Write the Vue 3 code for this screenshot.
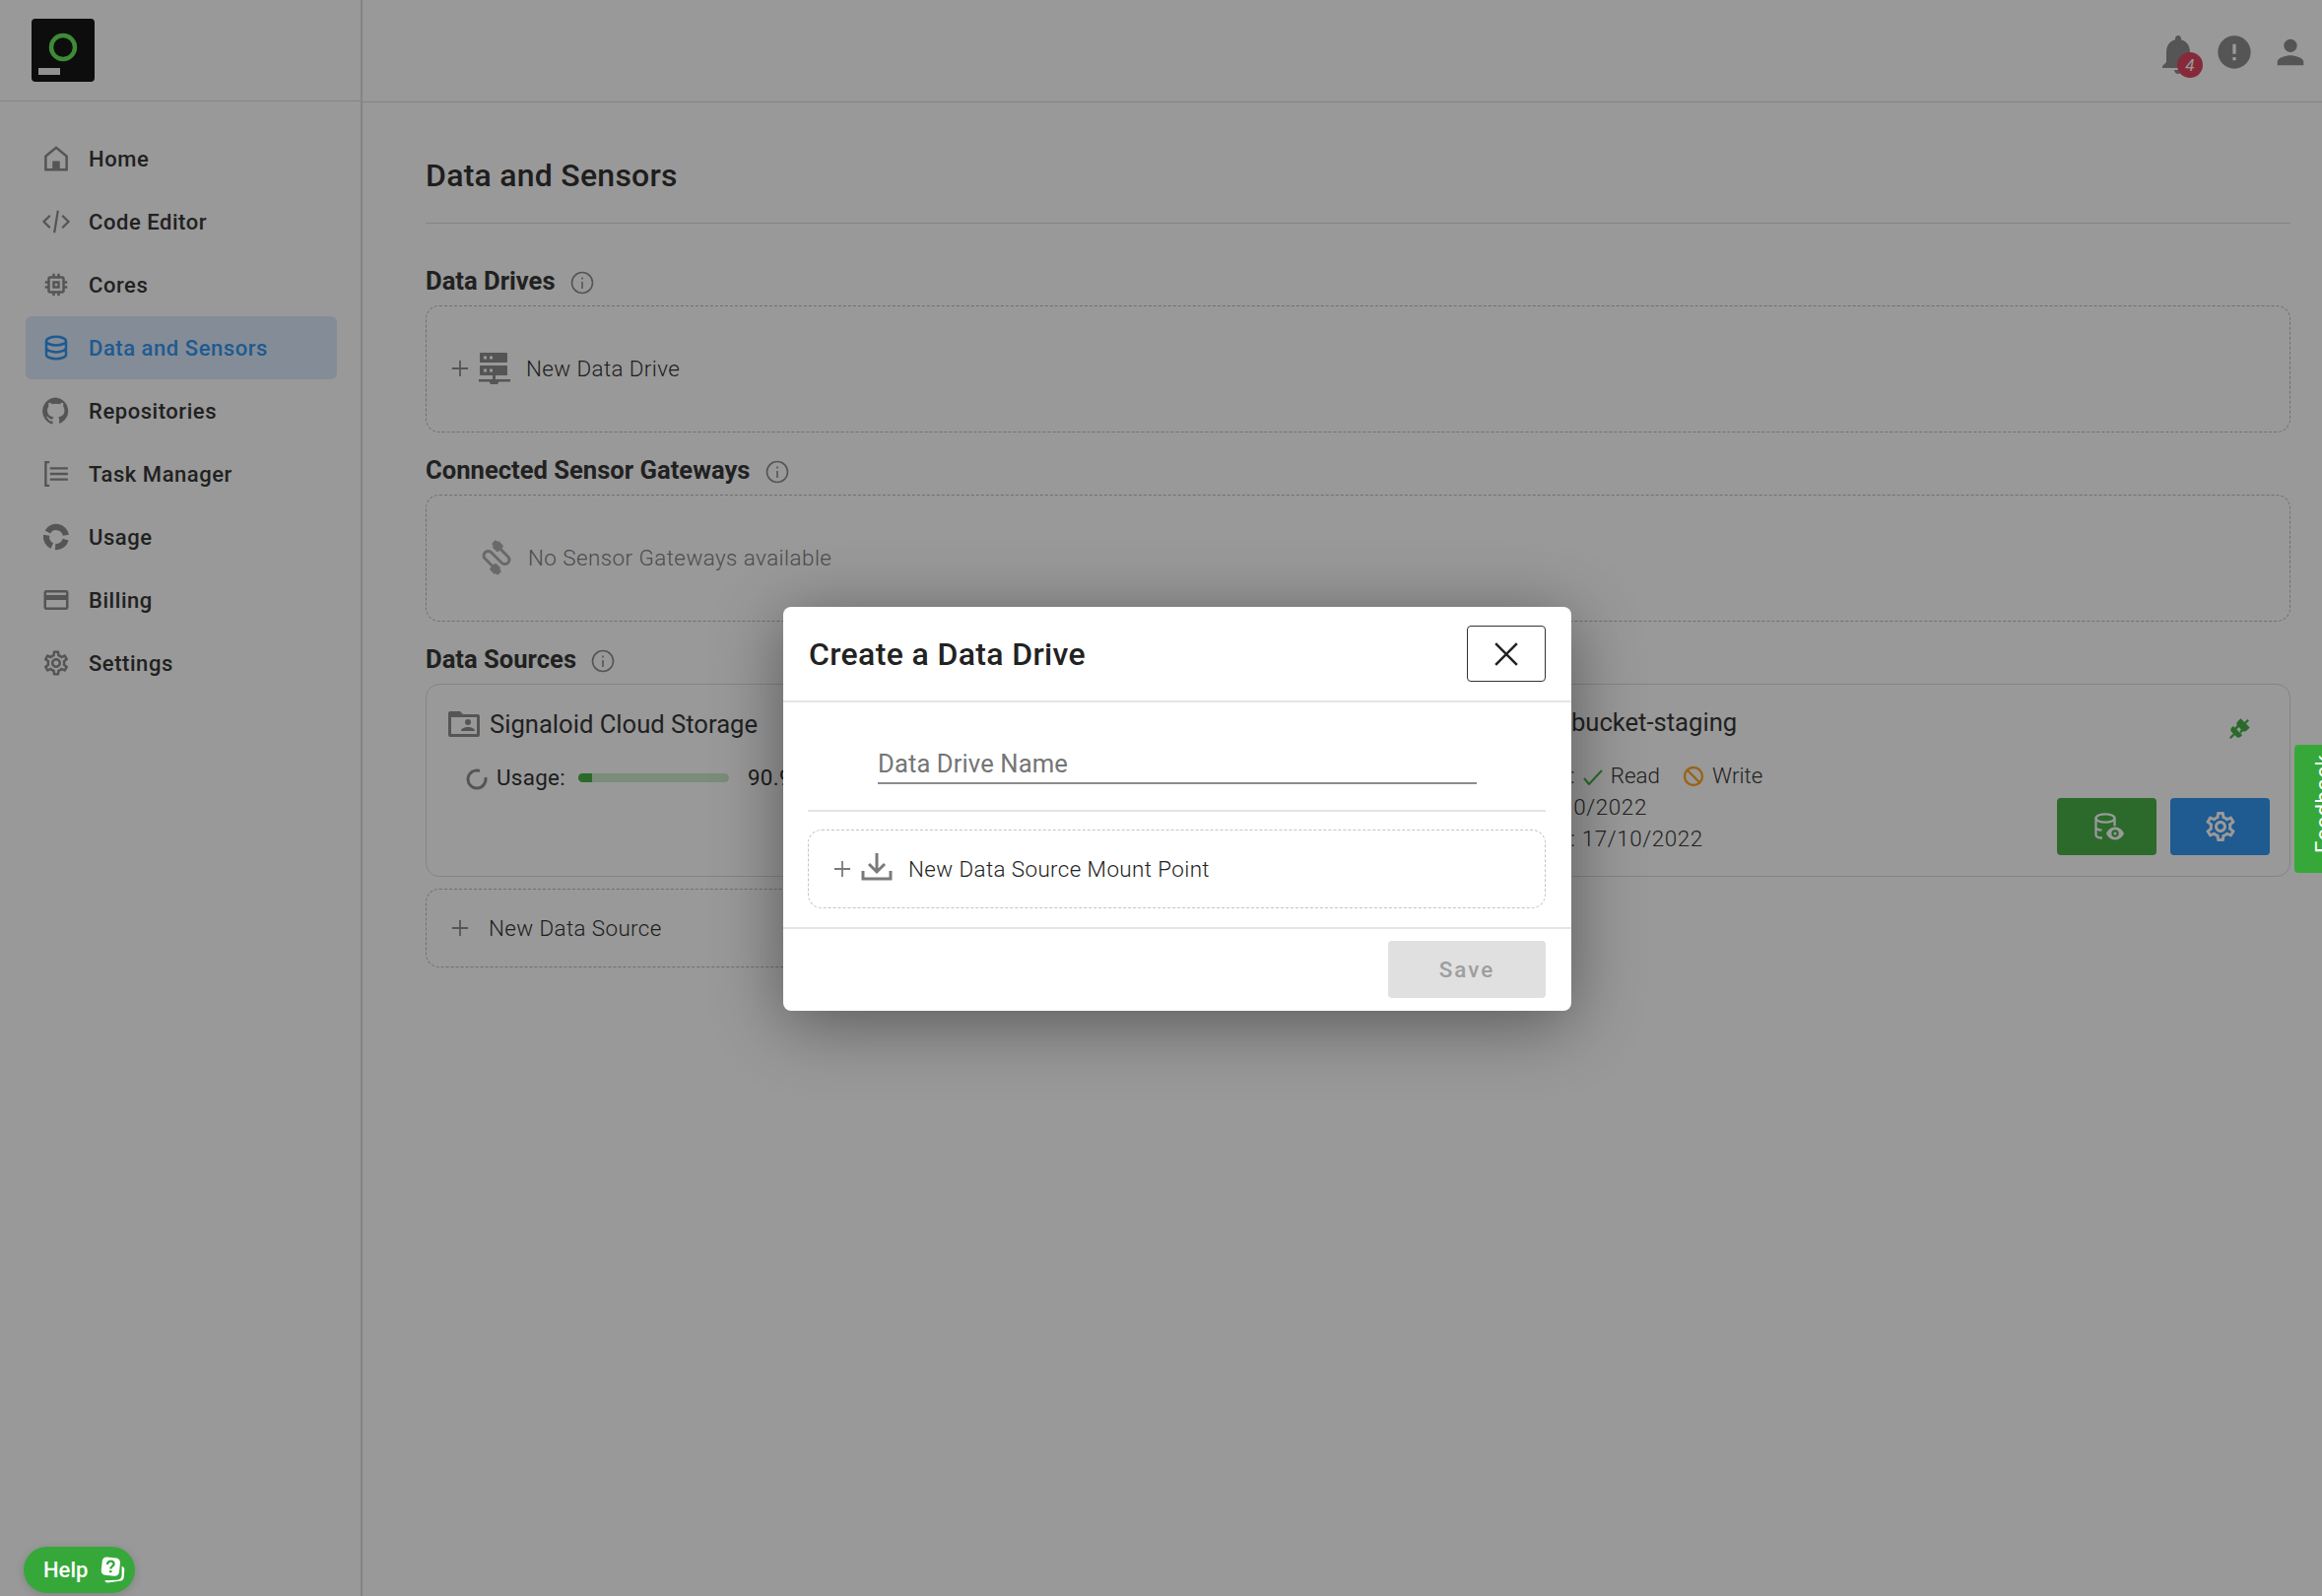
<script setup>
const nav = [
  { label: 'Home', stroke: 'M3.500 21V10L12 3l8.500 7v11z', fill: 'M9 14h6v7H9z' },
  { label: 'Code Editor', stroke: 'M7 7l-5 5 5 5M17 7l5 5-5 5M13.500 3l-3 18', sw: 1.800 },
  { label: 'Cores', fill: 'M15 9H9v6h6V9zm-2 4h-2v-2h2v2zm8-2V9h-2V7c0-1.100-.9-2-2-2h-2V3h-2v2h-2V3H9v2H7c-1.100 0-2 .9-2 2v2H3v2h2v2H3v2h2v2c0 1.100.9 2 2 2h2v2h2v-2h2v2h2v-2h2c1.100 0 2-.9 2-2v-2h2v-2h-2v-2h2zm-4 6H7V7h10v10z' },
  { label: 'Data and Sensors', active: true, stroke: 'M4 6.500C4 4.500 8 3 12 3s8 1.500 8 3.500S16 10 12 10 4 8.500 4 6.500zM4 6.500v11C4 19.500 8 21 12 21s8-1.500 8-3.500v-11M4 12c0 2 4 3.500 8 3.500s8-1.500 8-3.500' },
  { label: 'Repositories', fill: 'M12 1.270a11 11 0 00-3.480 21.460c.55.09.73-.28.73-.55v-1.840c-3.030.64-3.670-1.460-3.670-1.460-.55-1.290-1.280-1.650-1.280-1.650-.92-.65.1-.65.1-.65 1.100 0 1.730 1.100 1.730 1.100.92 1.650 2.560 1.200 3.100.92a2.700 2.700 0 01.65-1.640c-2.470-.28-5.020-1.200-5.020-5.500 0-1.200.46-2.200 1.100-3.020-.1-.27-.46-1.370.1-3 0 0 .91-.28 3.010 1.100a10.500 10.500 0 015.500 0c2.100-1.380 3-1.100 3-1.100.56 1.630.2 2.730.1 3 .64.82 1.100 1.820 1.100 3.020 0 4.300-2.550 5.220-5.020 5.500.37.36.74.92.74 1.920v2.830c0 .27.18.64.73.55A11 11 0 0012 1.270' },
  { label: 'Task Manager', stroke: 'M6.500 2.500H3.500v19h3M7 7.500h14.500M7 12h14.500M7 16.500h14.500', sw: 1.900 },
  { label: 'Usage', stroke: 'M5.070 8A8 8 0 0 1 19.880 10.600M19.700 14.070A8 8 0 0 1 11.300 19.970M8.600 19.250A8 8 0 0 1 4.120 10.600', sw: 5 },
  { label: 'Billing', fill: 'M20 4H4c-1.110 0-1.990.89-1.990 2L2 18c0 1.110.89 2 2 2h16c1.110 0 2-.89 2-2V6c0-1.110-.89-2-2-2zm0 14H4v-6h16v6zm0-10H4V6h16v2z' },
  { label: 'Settings', fill: 'M19.430 12.980c.04-.32.07-.64.07-.98 0-.34-.03-.66-.07-.98l2.110-1.650c.19-.15.24-.42.12-.64l-2-3.460c-.09-.16-.26-.25-.44-.25-.06 0-.12.01-.17.03l-2.490 1c-.52-.4-1.080-.73-1.690-.98l-.38-2.650C14.460 2.180 14.250 2 14 2h-4c-.25 0-.46.18-.49.42l-.38 2.650c-.61.25-1.170.59-1.690.98l-2.490-1c-.06-.02-.12-.03-.18-.03-.17 0-.34.09-.43.25l-2 3.460c-.13.22-.07.49.12.64l2.110 1.650c-.04.32-.07.65-.07.98 0 .33.03.66.07.98l-2.110 1.650c-.19.15-.24.42-.12.64l2 3.460c.09.16.26.25.44.25.06 0 .12-.01.17-.03l2.490-1c.52.4 1.080.73 1.690.98l.38 2.650c.03.24.24.42.49.42h4c.25 0 .46-.18.49-.42l.38-2.650c.61-.25 1.170-.59 1.690-.98l2.490 1c.06.02.12.03.18.03.17 0 .34-.09.43-.25l2-3.460c.12-.22.07-.49-.12-.64l-2.110-1.650zm-1.980-1.710c.04.31.05.52.05.73 0 .21-.02.43-.05.73l-.14 1.130.89.7 1.080.84-.7 1.210-1.270-.51-1.040-.42-.9.68c-.43.32-.84.56-1.250.73l-1.060.43-.16 1.130-.2 1.350h-1.400l-.19-1.350-.16-1.130-1.060-.43c-.43-.18-.83-.41-1.230-.71l-.91-.7-1.060.43-1.270.51-.7-1.210 1.080-.84.89-.7-.14-1.130c-.03-.31-.05-.54-.05-.74s.02-.43.05-.73l.14-1.130-.89-.7-1.080-.84.7-1.210 1.270.51 1.040.42.9-.68c.43-.32.84-.56 1.250-.73l1.060-.43.16-1.130.2-1.350h1.390l.19 1.350.16 1.130 1.060.43c.43.18.83.41 1.230.71l.91.7 1.060-.43 1.270-.51.7 1.210-1.070.85-.89.7.14 1.130zM12 8c-2.210 0-4 1.790-4 4s1.790 4 4 4 4-1.790 4-4-1.790-4-4-4zm0 6c-1.100 0-2-.9-2-2s.9-2 2-2 2 .9 2 2-.9 2-2 2z' }
]
const gear = nav[8].fill
</script>

<template>
  <div class="app">
    <aside class="sidebar">
      <div class="brand">
        <svg class="logo" viewBox="0 0 64 64">
          <rect width="64" height="64" rx="4" fill="#161616" />
          <circle cx="32" cy="29" r="12" fill="none" stroke="#66e85c" stroke-width="4.500" />
          <rect x="7" y="50" width="22" height="7" fill="#f2f2f2" />
        </svg>
      </div>
      <nav class="nav">
        <a v-for="item in nav" :key="item.label" class="nav-item" :class="{ active: item.active }">
          <svg class="nav-icon" viewBox="0 0 24 24">
            <path v-if="item.stroke" :d="item.stroke" fill="none" stroke="currentColor" :stroke-width="item.sw || 2" />
            <path v-if="item.fill" :d="item.fill" fill="currentColor" />
          </svg>
          <span>{{ item.label }}</span>
        </a>
      </nav>
    </aside>

    <div class="content">
      <header class="topbar">
        <span class="bell">
          <svg viewBox="0 0 24 24" class="top-icon bell-icon"><path d="M12 22c1.100 0 2-.9 2-2h-4c0 1.100.89 2 2 2zm6-6v-5c0-3.070-1.640-5.640-4.500-6.320V4c0-.83-.67-1.500-1.500-1.500s-1.500.67-1.500 1.500v.68C7.630 5.360 6 7.920 6 11v5l-2 2v1h16v-1l-2-2z" /></svg>
          <span class="badge">4</span>
        </span>
        <svg viewBox="0 0 24 24" class="top-icon"><path d="M12 2C6.480 2 2 6.480 2 12s4.480 10 10 10 10-4.480 10-10S17.520 2 12 2zm1 15h-2v-2h2v2zm0-4h-2V7h2v6z" /></svg>
        <svg viewBox="0 0 24 24" class="top-icon"><path d="M12 12c2.210 0 4-1.790 4-4s-1.790-4-4-4-4 1.790-4 4 1.790 4 4 4zm0 2c-2.670 0-8 1.340-8 4v2h16v-2c0-2.660-5.330-4-8-4z" /></svg>
      </header>

      <main class="main">
        <h1 class="title">Data and Sensors</h1>

        <h2 class="heading">Data Drives
          <svg class="info" viewBox="0 0 24 24"><circle cx="12" cy="12" r="10.500" /><path d="M12 11v7M12 6.500v2" /></svg>
        </h2>
        <div class="dashed tall add-row">
          <svg class="plus" viewBox="0 0 20 20"><path d="M10 1v18M1 10h18" /></svg>
          <svg class="server" viewBox="0 0 32 32">
            <path fill-rule="evenodd" d="M2 0h26a1 1 0 0 1 1 1v8a1 1 0 0 1-1 1H2a1 1 0 0 1-1-1V1a1 1 0 0 1 1-1zm3 3.500v3h3v-3zm6 0v3h3v-3zM2 13h26a1 1 0 0 1 1 1v8a1 1 0 0 1-1 1H2a1 1 0 0 1-1-1v-8a1 1 0 0 1 1-1zm3 3.500v3h3v-3zm6 0v3h3v-3z" />
            <path d="M14 23h3v4h15v2.500H20a4 3 0 0 1-9 0H0V27h14z" />
          </svg>
          <span class="add-label">New Data Drive</span>
        </div>

        <h2 class="heading spaced">Connected Sensor Gateways
          <svg class="info" viewBox="0 0 24 24"><circle cx="12" cy="12" r="10.500" /><path d="M12 11v7M12 6.500v2" /></svg>
        </h2>
        <div class="dashed tall empty-row">
          <svg class="cable" viewBox="0 0 24 24">
            <path transform="rotate(-45 12 12)" d="M20 5V4c0-.55-.45-1-1-1h-2c-.55 0-1 .45-1 1v1h-1v4c0 .55.45 1 1 1h1v7c0 1.100-.9 2-2 2s-2-.9-2-2V7c0-2.210-1.790-4-4-4S5 4.790 5 7v7H4c-.55 0-1 .45-1 1v4h1v1c0 .55.45 1 1 1h2c.55 0 1-.45 1-1v-1h1v-4c0-.55-.45-1-1-1H7V7c0-1.100.9-2 2-2s2 .9 2 2v10c0 2.210 1.790 4 4 4s4-1.790 4-4v-7h1c.55 0 1-.45 1-1V5h-1z" fill="currentColor" />
          </svg>
          <span class="empty-label">No Sensor Gateways available</span>
        </div>

        <h2 class="heading spaced">Data Sources
          <svg class="info" viewBox="0 0 24 24"><circle cx="12" cy="12" r="10.500" /><path d="M12 11v7M12 6.500v2" /></svg>
        </h2>
        <div class="sources">
          <section class="card card-left">
            <div class="card-title">
              <svg class="folder" viewBox="0 0 32 26">
                <path fill-rule="evenodd" d="M2 0h10l3 3h15a2 2 0 0 1 2 2v19a2 2 0 0 1-2 2H2a2 2 0 0 1-2-2V2a2 2 0 0 1 2-2zm1 6v17h26V6z" />
                <circle cx="20" cy="11" r="3" />
                <path d="M13 20c0-3 4-4 7-4s7 1 7 4z" />
              </svg>
              <span>Signaloid Cloud Storage</span>
            </div>
            <div class="usage">
              <svg class="usage-ring" viewBox="0 0 22 22"><path d="M19.800 9A9 9 0 1 1 14 2.500" /></svg>
              <span class="usage-label">Usage:</span>
              <span class="bar"><span class="bar-fill" :style="{ width: '9.100%' }"></span></span>
              <span class="usage-value">90.9 GB / 1 TB</span>
            </div>
          </section>

          <section class="card card-right">
            <div class="right-info">
              <div class="bucket">signaloid-bucket-staging</div>
              <div class="perms">
                <span>Permissions:</span>
                <svg class="check" viewBox="0 0 20 16"><path d="M1 9l5 6L19 1" /></svg>
                <span>Read</span>
                <svg class="ban" viewBox="0 0 22 22"><circle cx="11" cy="11" r="9" /><path d="M5 5l12 12" /></svg>
                <span>Write</span>
              </div>
              <div class="date">Created: 17/10/2022</div>
              <div class="date">Last Updated: 17/10/2022</div>
            </div>
            <div class="right-actions">
              <svg class="plug" viewBox="0 0 24 24">
                <g transform="rotate(45 12 12)">
                  <path d="M12 0v5M12 19v5" fill="none" stroke="currentColor" stroke-width="2" />
                  <path d="M6 4h12v4a3 3 0 0 1-3 3H9a3 3 0 0 1-3-3z" fill="currentColor" />
                  <path d="M8 10h2.500v4H15v-1h-1.500v-3H16v4h2v2a3 3 0 0 1-3 3H9a3 3 0 0 1-3-3v-2h2z" fill="currentColor" />
                </g>
              </svg>
              <div class="btns">
                <button class="btn green" type="button">
                  <svg viewBox="0 0 30 28" class="btn-icon db-eye">
                    <ellipse cx="11" cy="5.500" rx="9.500" ry="4.200" fill="none" stroke="currentColor" stroke-width="2.300" />
                    <path d="M1.500 5.500v17c0 1.800 3 3 6.500 3.200M20.500 5.500v8M1.500 14.500c0 1.800 3 3 6 3.200" fill="none" stroke="currentColor" stroke-width="2.300" />
                    <path fill-rule="evenodd" d="M21 14.500c4.500 0 7.500 3 9 6.500-1.500 3.500-4.500 6.500-9 6.500s-7.500-3-9-6.500c1.500-3.500 4.500-6.500 9-6.500zm0 2.800a3.700 3.700 0 1 0 0 7.400 3.700 3.700 0 0 0 0-7.400zm0 2.200a1.500 1.500 0 1 1 0 3 1.500 1.500 0 0 1 0-3z" fill="currentColor" />
                  </svg>
                </button>
                <button class="btn blue" type="button">
                  <svg viewBox="0 0 24 24" class="btn-icon solid"><path :d="gear" /></svg>
                </button>
              </div>
            </div>
          </section>
          <div class="dashed short add-row">
            <svg class="plus" viewBox="0 0 20 20"><path d="M10 1v18M1 10h18" /></svg>
            <span class="add-label source-label">New Data Source</span>
          </div>
        </div>
      </main>
    </div>

    <div class="overlay">
      <div class="modal">
        <div class="modal-head">
          <h3>Create a Data Drive</h3>
          <button class="close" type="button" aria-label="Close">
            <svg viewBox="0 0 24 24"><path d="M2 2l20 20M22 2L2 22" /></svg>
          </button>
        </div>
        <div class="modal-body">
          <div class="field">
            <input class="name-input" type="text" placeholder="Data Drive Name" />
          </div>
          <div class="mount">
            <svg class="plus modal-plus" viewBox="0 0 20 20"><path d="M10 1v18M1 10h18" /></svg>
            <svg class="download" viewBox="0 0 32 28"><path d="M16 0v19M8 11l8 8 8-8M2 18v8h28v-8" /></svg>
            <span>New Data Source Mount Point</span>
          </div>
        </div>
        <div class="modal-foot">
          <button class="save" type="button" disabled>Save</button>
        </div>
      </div>
    </div>

    <button class="help" type="button">
      <span>Help</span>
      <svg viewBox="0 0 26 26">
        <rect x="2" y="1" width="17" height="17" rx="4" fill="#fff" transform="rotate(6 11 10)" />
        <path d="M7.500 7.500c0-4.500 6.500-4 6-.3-.3 2-3 2-3 4.300M10.500 13v2" fill="none" stroke="#36a83a" stroke-width="2.200" />
        <path d="M21 9c2 1 2.500 2 2.500 3l-.5 7c-.2 3-2 4-4 4L8 24.500c-2 0-3-1-3-2l11.500-.5c3 0 4.500-2 4.500-5z" fill="#fff" />
      </svg>
    </button>
    <button class="feedback" type="button">Feedback</button>
  </div>
</template>

<style>
html, body { margin: 0; background: #fff; }
</style>

<style scoped>
.app {
  position: relative;
  display: grid;
  grid-template-columns: 368px 1fr;
  width: 2357px;
  height: 1620px;
  overflow: hidden;
  font-family: Roboto, "Liberation Sans", sans-serif;
  color: #333;
  background: #fff;
}
.sidebar { border-right: 2px solid #dcdcdc; box-sizing: border-box; }
.brand { height: 103px; box-sizing: border-box; padding: 19px 0 0 32px; border-bottom: 1px solid #dcdcdc; }
.logo { display: block; width: 64px; height: 64px; }
.nav { display: flex; flex-direction: column; padding: 26px 24px 0 26px; }
.nav-item {
  display: flex;
  align-items: center;
  height: 64px;
  padding-left: 16px;
  border-radius: 6px;
  font-size: 22px;
  font-weight: 500;
  letter-spacing: 0.55px;
  color: #383838;
}
.nav-icon { width: 30px; height: 30px; margin-right: 18px; color: #8e8e8e; flex: none; }
.nav-item.active { background: #dcebfc; color: #3496f0; }
.nav-item.active .nav-icon { color: #3496f0; }

.content { min-width: 0; }
.topbar {
  height: 104px;
  box-sizing: border-box;
  border-bottom: 1px solid #dcdcdc;
  display: flex;
  justify-content: flex-end;
  align-items: flex-start;
  gap: 17px;
  padding: 33px 12px 0 0;
}
.top-icon { width: 40px; height: 40px; fill: #8e8e8e; display: block; }
.bell { position: relative; display: block; width: 40px; height: 40px; }
.bell-icon { position: absolute; left: -4px; top: -2px; width: 48px; height: 48px; }
.badge {
  position: absolute;
  left: 19px;
  top: 20px;
  width: 26px;
  height: 26px;
  border-radius: 50%;
  background: #e0475f;
  color: #fff;
  font-size: 17px;
  font-style: italic;
  text-align: center;
  line-height: 26px;
}

.main { padding: 0 32px 0 64px; }
.title {
  margin: 0 0 44px;
  padding: 54px 0 28px;
  border-bottom: 1px solid #dcdcdc;
  font-size: 32px;
  line-height: 40px;
  font-weight: 500;
  letter-spacing: 0.25px;
  color: #333;
}
.heading {
  margin: 0 0 11px;
  height: 28px;
  display: flex;
  align-items: center;
  gap: 15px;
  font-size: 25.600px;
  line-height: 28px;
  font-weight: 700;
  color: #383838;
}
.heading.spaced { margin-top: 24px; }
.info { width: 24px; height: 24px; margin-top: 4px; fill: none; stroke: #8e8e8e; stroke-width: 1.600; }

.dashed { border: 1px dashed #b9b9b9; border-radius: 14px; box-sizing: border-box; display: flex; align-items: center; }
.tall { height: 129px; }
.short { height: 80px; }
.add-row { padding-left: 25px; }
.tall.add-row { padding-bottom: 2px; }
.plus { width: 18px; height: 18px; fill: none; stroke: #8e8e8e; stroke-width: 2; flex: none; }
.server { width: 32px; height: 32px; margin-left: 10px; fill: #8e8e8e; flex: none; }
.add-label { margin-left: 16px; font-size: 22.400px; font-weight: 300; letter-spacing: 0.4px; color: #333; }
.source-label { margin-left: 20px; }
.empty-row { padding-left: 54px; padding-bottom: 2px; color: #b0b0b0; }
.cable { width: 36px; height: 36px; flex: none; margin-left: -1px; }
.empty-label { margin-left: 14px; font-size: 22.400px; font-weight: 300; letter-spacing: 0.45px; color: #808080; }

.sources { display: grid; grid-template-columns: 1fr 1fr; gap: 12px 16px; }
.card { height: 196px; box-sizing: border-box; border: 1px solid #dcdcdc; border-radius: 14px; }
.card-left { padding: 27px 22px 0; }
.card-title { display: flex; align-items: center; gap: 10px; font-size: 25.600px; line-height: 26px; font-weight: 400; color: #383838; }
.folder { width: 32px; height: 26px; fill: #8e8e8e; flex: none; }
.usage { display: flex; align-items: center; margin: 28px 0 0 18px; font-size: 22.400px; font-weight: 300; letter-spacing: 0.3px; }
.usage-ring { width: 22px; height: 22px; fill: none; stroke: #8e8e8e; stroke-width: 3; margin-top: 3px; }
.usage-label { margin-left: 9px; font-weight: 400; }
.bar { display: block; width: 153px; height: 9px; margin-left: 13px; background: #cbeacc; border-radius: 5px; overflow: hidden; }
.bar-fill { display: block; height: 100%; background: #48b148; }
.usage-value { margin-left: 19px; white-space: nowrap; font-weight: 400; }

.card-right { display: flex; justify-content: space-between; padding: 23px 20px 21px 85px; }
.right-info { color: #383838; }
.bucket { font-size: 25.600px; line-height: 30px; font-weight: 400; white-space: nowrap; margin-left: 12px; }
.perms { display: flex; align-items: center; margin-top: 23px; font-size: 22.400px; line-height: 32px; white-space: nowrap; font-weight: 300; }
.check { width: 20px; height: 16px; fill: none; stroke: #48b148; stroke-width: 2; margin: 4px 8px 0 8px; }
.ban { width: 22px; height: 22px; fill: none; stroke: #ffa528; stroke-width: 2.400; margin: 2px 8px 0 23px; }
.date { font-size: 22.400px; line-height: 32px; font-weight: 300; white-space: nowrap; margin-left: -16px; letter-spacing: 0.6px; }
.right-actions { display: flex; flex-direction: column; justify-content: space-between; align-items: flex-end; }
.plug { width: 26px; height: 26px; color: #48b148; margin: 9px 18px 0 0; }
.btns { display: flex; gap: 14px; }
.btn { width: 101px; height: 58px; border: 0; border-radius: 4px; padding: 0; display: flex; align-items: center; justify-content: center; color: #fff; }
.green { background: #48b148; }
.blue { background: #3496f0; }
.btn-icon { width: 30px; height: 28px; }
.db-eye { margin-left: 4px; }
.btn-icon.solid { fill: currentColor; width: 36px; height: 36px; }

.overlay {
  position: absolute;
  inset: 0;
  background: rgba(0, 0, 0, 0.4);
  padding: 616px 0 0 795px;
  box-sizing: border-box;
}
.modal {
  width: 800px;
  height: 410px;
  background: #fff;
  border-radius: 8px;
  box-shadow: 0 12px 70px rgba(0, 0, 0, 0.42);
  display: flex;
  flex-direction: column;
}
.modal-head {
  height: 97px;
  box-sizing: border-box;
  border-bottom: 2px solid #e4e4e4;
  display: flex;
  align-items: center;
  justify-content: space-between;
  padding: 0 26px;
}
.modal-head h3 { margin: 0; font-size: 32px; font-weight: 500; letter-spacing: 0.35px; color: #222; padding-top: 1px; }
.close { width: 80px; height: 57px; background: #fff; border: 1.500px solid #333; border-radius: 4px; padding: 0; display: flex; align-items: center; justify-content: center; }
.close svg { width: 26px; height: 26px; fill: none; stroke: #222; stroke-width: 2.400; }
.modal-body { flex: 1; padding: 0 26px 0 25px; display: flex; flex-direction: column; }
.field { height: 111px; box-sizing: border-box; padding: 36px 70px 0 71px; border-bottom: 2px solid #e4e4e4; }
.name-input {
  width: 100%;
  box-sizing: border-box;
  height: 47px;
  border: 0;
  border-bottom: 2px solid #8c8c8c;
  outline: 0;
  padding: 6px 0 0;
  font: 400 25.600px Roboto, sans-serif;
  letter-spacing: 0.1px;
}
.name-input::placeholder { color: #757575; opacity: 1; }
.mount {
  margin-top: 18px;
  height: 80px;
  box-sizing: border-box;
  border: 1px dashed #c4c4c4;
  border-radius: 14px;
  display: flex;
  align-items: center;
  padding-left: 25px;
  font-size: 22.400px;
  font-weight: 300;
  letter-spacing: 0.4px;
  color: #222;
}
.modal-plus { stroke: #7a7a7a; }
.download { width: 32px; height: 28px; margin-left: 10px; margin-top: -4px; fill: none; stroke: #7a7a7a; stroke-width: 3; flex: none; }
.mount span { margin-left: 16px; margin-top: -1px; }
.modal-foot {
  height: 85px;
  box-sizing: border-box;
  border-top: 2px solid #e4e4e4;
  display: flex;
  justify-content: flex-end;
  padding: 12px 26px 0 0;
}
.save {
  width: 160px;
  height: 58px;
  border: 0;
  border-radius: 4px;
  background: #e0e0e0;
  color: #9e9e9e;
  font: 500 22.400px Roboto, sans-serif;
  letter-spacing: 2px;
}

.help {
  position: absolute;
  left: 24px;
  top: 1570px;
  width: 113px;
  height: 47px;
  border: 0;
  border-radius: 24px;
  background: #36a83a;
  color: #fff;
  display: flex;
  align-items: center;
  padding: 0 0 0 20px;
  gap: 12px;
  font: 500 22px Roboto, sans-serif;
  box-shadow: 0 2px 10px rgba(0, 0, 0, 0.15);
}
.help svg { width: 28px; height: 28px; }
.feedback {
  position: absolute;
  right: -29px;
  top: 756px;
  width: 57px;
  height: 130px;
  border: 0;
  background: #36a83a;
  color: #fff;
  padding: 10px 0 0;
  writing-mode: vertical-rl;
  transform: rotate(180deg);
  border-radius: 0 4px 4px 0;
  font: 400 22.400px Roboto, sans-serif;
  letter-spacing: 0.5px;
  text-align: center;
}
</style>
